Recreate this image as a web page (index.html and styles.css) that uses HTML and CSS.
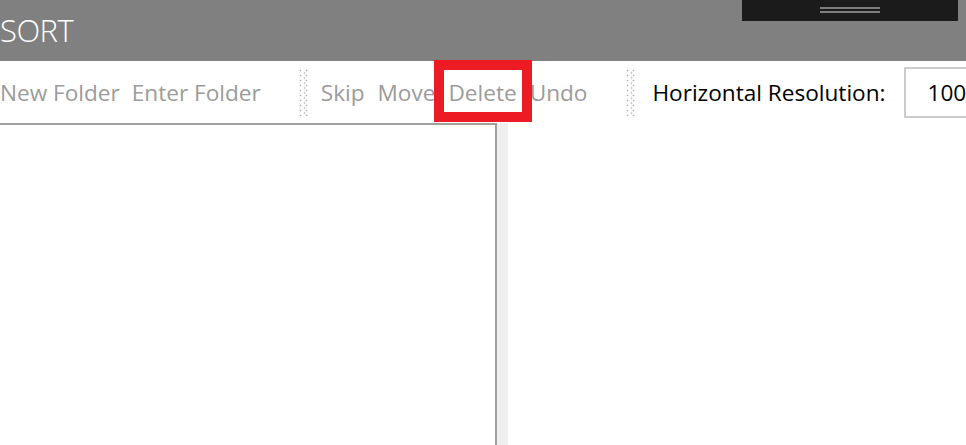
FILE: index.html
```html
<!DOCTYPE html>
<html>
<head>
<meta charset="utf-8">
<link rel="stylesheet" href="styles.css">
</head>
<body>
<header class="titlebar">
  <span class="title">SORT</span>
  <div class="chrome"><span class="grip-line"></span><span class="grip-line"></span></div>
</header>
<div class="toolbar">
  <div class="group g1">
    <span class="tool">New Folder</span>
    <span class="tool">Enter Folder</span>
  </div>
  <span class="gripper"></span>
  <div class="group g2">
    <span class="tool">Skip</span>
    <span class="tool">Move</span>
    <span class="tool marked">Delete</span>
    <span class="tool">Undo</span>
  </div>
  <span class="gripper"></span>
  <div class="group g3">
    <span class="label">Horizontal Resolution:</span>
    <span class="input">100</span>
  </div>
</div>
<main class="content">
  <section class="left-pane"></section>
  <div class="splitter"></div>
  <section class="right-pane"></section>
</main>
</body>
</html>
```
FILE: styles.css
```css
*, *::before, *::after { box-sizing: border-box; }
html, body { margin: 0; padding: 0; }
body {
  width: 966px;
  height: 445px;
  overflow: hidden;
  background: #fff;
  font-family: "Open Sans", "Noto Sans", sans-serif;
}
.titlebar {
  position: relative;
  height: 61px;
  background: #808080;
  display: flex;
  align-items: center;
}
.title {
  color: #fff;
  font-size: 31px;
  font-weight: 300;
  margin-left: 0;
  margin-top: -1px;
  letter-spacing: -0.5px;
}
.chrome {
  position: absolute;
  top: 0;
  left: 742px;
  width: 216px;
  height: 21px;
  background: #1b1b1b;
  display: flex;
  flex-direction: column;
  align-items: center;
  padding-top: 7px;
  gap: 2px;
}
.grip-line {
  width: 60px;
  height: 2px;
  background: #7e7e7e;
}
.toolbar {
  height: 62px;
  display: flex;
  align-items: center;
  font-size: 22.6px;
  white-space: nowrap;
}
.toolbar > *, .group > * { flex-shrink: 0; }
.group { display: flex; align-items: center; }
.tool { color: #9b9b9b; }
.g1 { margin-left: 0; gap: 12px; }
.g2 { gap: 13px; }
.gripper {
  width: 10px;
  height: 47px;
  margin-top: 1px;
  background-image:
    radial-gradient(circle at 1.5px 1.5px, #b4b4b4 0.8px, transparent 1.1px),
    radial-gradient(circle at 1.5px 1.5px, #b4b4b4 0.8px, transparent 1.1px);
  background-size: 6px 5px, 6px 5px;
  background-position: 0 0, 4px 2.5px;
}
.g1 + .gripper { margin-left: 38px; margin-right: 12px; }
.g2 + .gripper { margin-left: 39px; margin-right: 16px; }
.marked { position: relative; }
.marked::after {
  content: "";
  position: absolute;
  left: -14px;
  top: -17px;
  width: 98px;
  height: 62px;
  border: 10px solid #ed1c24;
}
.label { color: #000; }
.input {
  margin-left: 18px;
  width: 80px;
  height: 51px;
  border: 2px solid #cccccc;
  padding-left: 22px;
  display: flex;
  align-items: center;
  color: #000;
}
.content {
  display: flex;
  height: 322px;
}
.left-pane {
  width: 497px;
  border-top: 2px solid #a0a0a0;
  border-right: 2px solid #a0a0a0;
}
.splitter {
  width: 11px;
  background: #efefef;
}
.right-pane { flex: 1; }
```
